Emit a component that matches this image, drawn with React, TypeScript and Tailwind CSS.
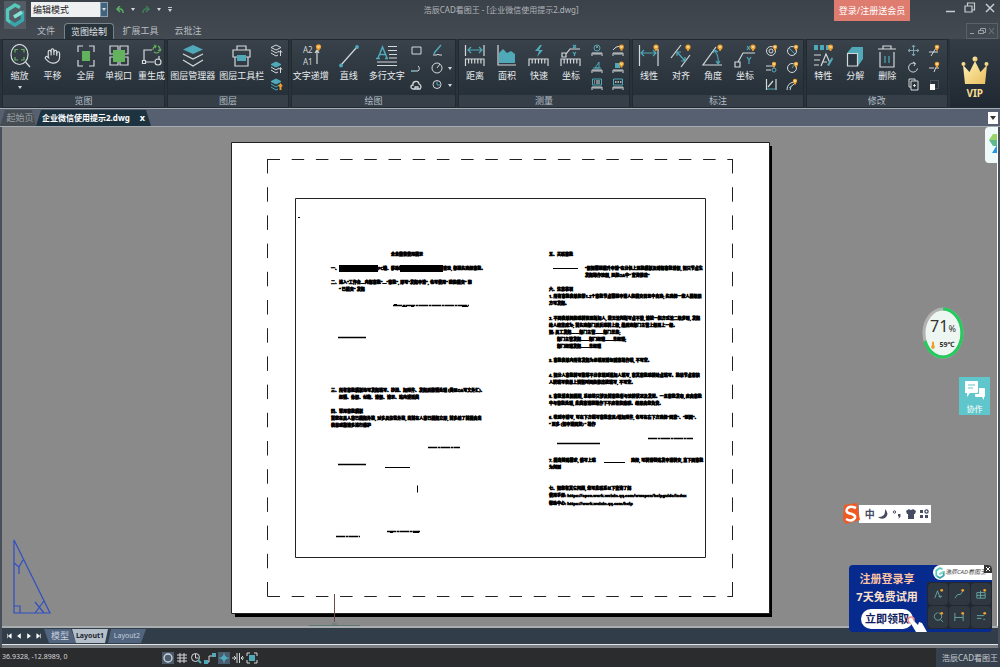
import type { ReactNode } from "react";
import { Hand } from "lucide-react";

const W = "#d3d8db";
const T = "#4fa9b8";
const G = "#62b35c";
const O = "#f0a02c";

/* ---------- icon helpers ---------- */

const Big = ({ children }: { children: ReactNode }) => (
  <svg className="h-6 w-[22px] shrink-0" viewBox="0 0 22 24" fill="none" stroke={W} strokeWidth="1.2">
    {children}
  </svg>
);

const Small = ({ children }: { children: ReactNode }) => (
  <svg className="h-[13px] w-[13px]" viewBox="0 0 13 13" fill="none" stroke={W} strokeWidth="1">
    {children}
  </svg>
);

const Badge = ({ x, y, r = 2.6 }: { x: number; y: number; r?: number }) => (
  <g stroke="none">
    <circle cx={x} cy={y} r={r} fill={O} />
    <rect x={x - 1} y={y + r - 0.6} width="2" height="1.8" fill={O} />
    <path d={`M${x - 1} ${y - 1}L${x} ${y + 1}L${x + 1} ${y - 1}`} stroke="#fff3d0" strokeWidth="0.8" fill="none" />
  </g>
);

const Ruler = ({ x = 1, y = 15, w = 19, h = 7, n = 6 }) => (
  <path
    d={
      `M${x} ${y + h}V${y}H${x + w}V${y + h}` +
      Array.from({ length: n - 1 }, (_, i) => `M${x + ((i + 1) * w) / n} ${y}v${h * 0.65}`).join("")
    }
  />
);

const Caret = () => (
  <svg className="h-[3px] w-1" viewBox="0 0 4 3" fill={W}>
    <path d="M0 0h4L2 3z" />
  </svg>
);

/* ---------- ribbon icons ---------- */

const icons: Record<string, ReactNode> = {
  zoom: (
    <Big>
      <ellipse cx="10.5" cy="10.5" rx="8.5" ry="10" />
      <path d="M16.5 18L21 23" />
      <path d="M6 8.500V5.500h3M12 5.500h3v3M15 13v3h-3M9 16H6v-3" stroke={G} />
    </Big>
  ),
  pan: <Hand className="h-6 w-[17px] shrink-0 text-[#d3d8db]" strokeWidth={1.7} />,
  full: (
    <Big>
      <path d="M3 8V2h5M14 2h5v6M19 16v6h-5M8 22H3v-6" />
      <rect x="7" y="7" width="8" height="10" fill={G} stroke="none" />
    </Big>
  ),
  viewport: (
    <Big>
      <path d="M2 2h8v8H2zM12 2h8v8h-8zM2 13h8v8H2zM12 13h8v8h-8z" />
      <rect x="5" y="6" width="12" height="12" fill={G} stroke="none" />
    </Big>
  ),
  regen: (
    <Big>
      <path d="M11 6H3v12h10M18 12v4" />
      <circle cx="17" cy="18" r="3" />
      <path d="M1.500 16.500h3v3h-3z" fill="#2c363e" />
      <path d="M12 6a4 4 0 0 1 3-4M17 2a4 4 0 0 1 2 4M18 8a4 4 0 0 1-5 0M13 1l2 1-1 2M20 5l-1 2-2-1" stroke={G} />
    </Big>
  ),
  layers: (
    <Big>
      <path d="M11 1l10 4.500-10 4.500L1 5.500z" fill={T} stroke="none" />
      <path d="M1 10l10 5 10-5M1 16l10 6 10-6" />
    </Big>
  ),
  toolbox: (
    <Big>
      <path d="M6 6V2h9v4M2 6h17v7H2zM4 13v9h13v-9" />
      <rect x="6" y="11" width="9" height="6" fill={T} stroke="none" />
    </Big>
  ),
  increment: (
    <Big>
      <g fill={W} stroke="none" fontSize="8" fontFamily="Noto Sans, sans-serif">
        <text x="3" y="9">A2</text>
        <text x="3" y="21">A1</text>
      </g>
      <path d="M17 20V7M15 9l2-3 2 3" />
      <Badge x={18.500} y={2.800} />
    </Big>
  ),
  line: (
    <Big>
      <path d="M3 21L19 3" />
      <circle cx="3" cy="21.500" r="1.900" fill={T} stroke="none" />
      <circle cx="19" cy="3" r="1.900" fill={T} stroke="none" />
    </Big>
  ),
  mtext: (
    <Big>
      <path d="M2 14L6.500 3L11 14M3.500 10.500h6M0 14.500h4M9 14.500h3" stroke={T} strokeWidth="1.500" />
      <path d="M12 2.500h9M12 6.500h9M13 10.500h8M13 14h8M1 18h20M1 21.500h20" />
    </Big>
  ),
  distance: (
    <Big>
      <path d="M1.500 1v11M20 1v11" />
      <path d="M4 6h14M7 3L4 6l3 3M15 3l3 3-3 3" stroke={T} />
      <Ruler x={1.500} w={18.500} />
    </Big>
  ),
  area: (
    <Big>
      <path d="M3 19V9l4-4 4 4 4-2 4 3v9z" fill={T} stroke="none" />
      <path d="M2 1v20h18" />
    </Big>
  ),
  quick: (
    <Big>
      <path d="M12 1L7 7h4l-2 6 6-7h-4l3-5z" fill={T} stroke="none" />
      <Ruler />
    </Big>
  ),
  coord: (
    <Big>
      <path d="M2 9h4v4H2zM6 10l4-5h10" />
      <path d="M13 1l3 3M16 1l-3 3M13 8l1.500 2L16 8M14.500 10v2" stroke={T} />
      <Ruler />
    </Big>
  ),
  linear: (
    <Big>
      <path d="M1.500 1v21M20 5v17" />
      <path d="M3 9h15M6 6L3 9l3 3M15 6l3 3-3 3" stroke={T} />
      <Badge x={18} y={3} />
    </Big>
  ),
  aligned: (
    <Big>
      <path d="M1 14L11 1M11 23l9-12" />
      <path d="M7 8l8 9M7 12V8h4M15 13v4h-4" stroke={T} />
      <Badge x={18} y={3} />
    </Big>
  ),
  angle: (
    <Big>
      <path d="M20 21H1L14 3" />
      <path d="M13 7q4 5 3 12M11 9l2-3 3 2M14 17l2 3 2-3" stroke={T} />
      <Badge x={18} y={3} />
    </Big>
  ),
  ordinate: (
    <Big>
      <path d="M1 18h5v5H1zM4 18l5-9h12" />
      <path d="M13 2l3 4M16 2l-3 4M13 13l2 3 2-3M15 16v4" stroke={T} />
      <Badge x={19} y={3} />
    </Big>
  ),
  props: (
    <Big>
      <path d="M2 1h4v5H2zM8 1h4v5H8zM14 1h3v5h-3z" fill={T} stroke="none" />
      <path d="M2 11h7M2 16h6M2 21h5M9 22l5-12 4 9M10 18h5" />
      <path d="M20 13l-5 8 2 1 4-7z" fill={T} stroke="none" />
      <Badge x={18.500} y={3} />
    </Big>
  ),
  cube: (
    <Big>
      <path d="M3 9L8 3h11v12l-5 7V9z" fill={T} stroke="none" />
      <path d="M3.500 9.500h10V22h-10z" fill="#2c363e" />
    </Big>
  ),
  trash: (
    <Big>
      <path d="M2 5h18M7 5V2h8v3M4 8v15h14V8" />
      <path d="M9 12v7M13 12v7" stroke={T} />
    </Big>
  ),
};

const LayerSmall = ({ top = "none", tail = W }) => (
  <Small>
    <path d="M6 1l5 2.500L6 6 1 3.500z" fill={top} stroke={top === "none" ? W : top} />
    <path d="M1 6l5 3 3-2M1 9l5 3 2-1" stroke={tail === O ? T : W} />
    <path d="M10.500 12V7M9 8.500l1.500-2 1.500 2" stroke={tail} strokeWidth={tail === O ? 1.8 : 1} />
  </Small>
);

const layerTools = [
  <LayerSmall />,
  <LayerSmall top={T} />,
  <LayerSmall top={T} tail={O} />,
];

const drawTools = [
  <Small><path d="M2 3h9v7H2z" /></Small>,
  <Small><path d="M1 10h7a3 3 0 0 0 0-5" /><path d="M1 10h4" stroke={T} /></Small>,
  <Small><path d="M3 11a2 2 0 0 1 0-4 3 3 0 0 1 6-1 3 3 0 0 1 1 5zM5 11V9h3v2" strokeWidth="1.300" /></Small>,
];

const drawTools2 = [
  <Small><path d="M10 1L4 8l-1 2" stroke={T} strokeWidth="1.500" /><path d="M2 11h4q1-2 2 0h3" /></Small>,
  <Small><circle cx="6" cy="7" r="5" /><path d="M6 7l3-4" /></Small>,
  <Small><circle cx="6" cy="6.500" r="4" /><path d="M6 3.500V7h3" stroke={T} /></Small>,
];

const measureTools = [
  <Small><circle cx="6" cy="4" r="3" stroke={T} /><path d="M6 2v2" /><Ruler x={1} y={9} w={10} h={3} n={5} /></Small>,
  <Small><path d="M4 7l4-6v6zM2 7h8" stroke={T} /><Ruler x={1} y={9} w={10} h={3} n={5} /></Small>,
  <Small><path d="M1.500 1h9v6h-9z" stroke={T} /><path d="M3 3h1M5 3h4M3 5h1M5 5h4" /><Ruler x={1} y={9} w={10} h={3} n={5} /></Small>,
];

const measureTools2 = [
  <Small><path d="M1 6q4-5 8-3" /><Ruler x={1} y={9} w={10} h={3} n={5} /><Badge x={9.500} y={3} r={2.400} /></Small>,
  <Small><path d="M3 2h5v5H3z" fill={T} stroke="none" /><Ruler x={1} y={9} w={10} h={3} n={5} /><Badge x={9.500} y={3} r={2.400} /></Small>,
  <Small><path d="M1.500 1h9v6h-9z" stroke={T} /><path d="M3 4h1.500M5.500 4H7M8 4h1.500" strokeWidth="1.500" /><Ruler x={1} y={9} w={10} h={3} n={5} /></Small>,
];

const dimTools = [
  <Small><circle cx="6" cy="7" r="4.500" /><circle cx="6" cy="7" r="2" /><Badge x={10} y={3} r={2.200} /></Small>,
  <Small><path d="M1 5h7M1 9h5" /><circle cx="9" cy="9" r="2" stroke={T} /><Badge x={9} y={3} r={2.200} /></Small>,
  <Small><path d="M1.500 1v11M11 1v11M3 9l5-6" strokeWidth="1.200" /><path d="M2 11h8" stroke={T} /></Small>,
];

const dimTools2 = [
  <Small><circle cx="6" cy="7" r="4.500" /><path d="M3 4l6 6" stroke={T} /><Badge x={10} y={3} r={2.200} /></Small>,
  <Small><circle cx="6" cy="7" r="4.500" /><path d="M6 7l3-4" stroke={T} /><Badge x={10} y={3} r={2.200} /></Small>,
  <Small><path d="M1 12q0-7 7-8M4 12q0-4 4-6" /><path d="M3 10l2-2" stroke={T} /><Badge x={9} y={3} r={2.200} /></Small>,
];

const modTools = [
  <Small><path d="M6.500 1v11M1 6.500h11M5 3l1.500-2L8 3M5 10l1.500 2L8 10M3 5L1 6.500 3 8M10 5l2 1.500L10 8" stroke="#7fa3b0" /></Small>,
  <Small><path d="M8 2.500a4.500 4.500 0 1 0 2.500 5M6 1l2.500 1.500L7 5" /></Small>,
  <Small><path d="M2 1h6v2M2 1v8h2M4 3h7v9H4zM6 7.500h3M7.500 6v3" /></Small>,
];

const modTools2 = [
  <Small><path d="M1 8h9M3 12l5-8" /><Badge x={9} y={3} r={2.300} /></Small>,
  <Small><path d="M1 7h5M8 7h3M6 11l2-5" /><Badge x={9} y={3} r={2.300} /></Small>,
  <Small><path d="M2.500 2.500h8v8h-8z" stroke="#64717a" strokeDasharray="1 1" /><path d="M2 6h5v6H2z" fill="#fff" stroke="none" /></Small>,
];

/* ---------- ribbon ---------- */

type Tool = { icon: string; label: string; menu?: boolean };

type GroupProps = {
  title: string;
  tools: Tool[];
  className: string;
  toolClass?: string;
  columns?: ReactNode[][];
  carets?: boolean;
};

const RibbonGroup = ({ title, tools, className, toolClass = "w-8", columns = [], carets }: GroupProps) => (
  <section aria-label={title} className={`flex min-w-0 flex-col border border-[#222a31] bg-linear-to-b from-[#39424a] to-[#222c34] ${className}`}>
    <div className="flex flex-1">
      {tools.map((t) => (
        <button key={t.label} className={`flex shrink-0 flex-col items-center pt-1 ${toolClass}`}>
          {icons[t.icon]}
          <span className="mt-0.5 text-[9px] leading-3 whitespace-nowrap text-[#e8ecee]">{t.label}</span>
          {t.menu && <span className="mt-1"><Caret /></span>}
        </button>
      ))}
      {columns.map((col, i) => (
        <div key={i} className="flex w-[21px] shrink-0 flex-col items-center pt-0.5">
          {col.map((icon, j) => (
            <button key={j} aria-label={`${title} ${i * 3 + j + 1}`} className="flex h-[17px] items-center">
              {icon}
            </button>
          ))}
        </div>
      ))}
      {carets && (
        <div className="flex flex-col justify-end gap-3.5 pb-2">
          <Caret />
          <Caret />
        </div>
      )}
    </div>
    <h2 className="h-3 bg-[#363f47] text-center text-[9px] leading-3 text-[#b3bec8]">{title}</h2>
  </section>
);

const Ribbon = () => (
  <div className="flex h-[69px] gap-0.5 bg-[#2a323a] pl-0.5">
    <RibbonGroup
      title="览图"
      className="flex-[163]"
      toolClass="w-[33px]"
      tools={[
        { icon: "zoom", label: "缩放", menu: true },
        { icon: "pan", label: "平移" },
        { icon: "full", label: "全屏" },
        { icon: "viewport", label: "单视口" },
        { icon: "regen", label: "重生成" },
      ]}
    />
    <RibbonGroup
      title="图层"
      className="flex-[121]"
      toolClass="w-[49px]"
      tools={[
        { icon: "layers", label: "图层管理器" },
        { icon: "toolbox", label: "图层工具栏" },
      ]}
      columns={[layerTools]}
    />
    <RibbonGroup
      title="绘图"
      className="flex-[165]"
      toolClass="w-[38px]"
      tools={[
        { icon: "increment", label: "文字递增" },
        { icon: "line", label: "直线" },
        { icon: "mtext", label: "多行文字" },
      ]}
      columns={[drawTools, drawTools2]}
      carets
    />
    <RibbonGroup
      title="测量"
      className="flex-[172]"
      tools={[
        { icon: "distance", label: "距离" },
        { icon: "area", label: "面积" },
        { icon: "quick", label: "快速" },
        { icon: "coord", label: "坐标" },
      ]}
      columns={[measureTools, measureTools2]}
    />
    <RibbonGroup
      title="标注"
      className="flex-[172]"
      tools={[
        { icon: "linear", label: "线性" },
        { icon: "aligned", label: "对齐" },
        { icon: "angle", label: "角度" },
        { icon: "ordinate", label: "坐标" },
      ]}
      columns={[dimTools, dimTools2]}
    />
    <RibbonGroup
      title="修改"
      className="flex-[141]"
      tools={[
        { icon: "props", label: "特性" },
        { icon: "cube", label: "分解" },
        { icon: "trash", label: "删除" },
      ]}
      columns={[modTools, modTools2]}
    />
    <button className="flex flex-[51] flex-col items-center bg-linear-to-b from-[#343d45] to-[#202931] pt-4">
      <svg className="h-[30px] w-7" viewBox="0 0 28 30">
        <defs>
          <linearGradient id="gold" x1="0" y1="0" x2="1" y2="1">
            <stop offset="0" stopColor="#fff3b8" />
            <stop offset="1" stopColor="#e9bd5b" />
          </linearGradient>
        </defs>
        <g fill="url(#gold)">
          <path d="M2 10l6.500 7L14 6l5.500 11L26 10l-2 19H4z" />
          <circle cx="2.500" cy="9" r="2" />
          <circle cx="14" cy="4" r="2.500" />
          <circle cx="25.500" cy="9" r="2" />
        </g>
      </svg>
      <span className="text-[10px] leading-4 font-bold text-[#f6dc92]">VIP</span>
    </button>
  </div>
);

/* ---------- title bar and menu ---------- */

const Logo = ({ className }: { className: string }) => (
  <svg className={className} viewBox="0 0 20 24" fill="none" strokeWidth="3.400">
    <path d="M15 4.500L10 2 2.500 7v10l4 3" stroke="#56c9bd" />
    <path d="M5 19l5 3 7.500-5v-7L9 14" stroke="#37a6ad" />
    <path d="M9 14l8-5" stroke="#8be0d0" />
  </svg>
);

const TitleBar = () => (
  <header className="flex h-[39px] bg-linear-to-b from-[#3c4249] to-[#434a51]">
    <div className="mt-px ml-1 flex h-7 w-[22px] items-center justify-center bg-[#535c65]">
      <Logo className="h-6 w-5" />
    </div>
    <div className="min-w-0 flex-1">
      <div className="flex h-[22px]">
        <div className="flex flex-[398] items-start gap-2 pt-0.5 pl-[5px]">
          <div className="relative flex h-[15px] w-[77px]">
            <select aria-label="工作模式" className="w-full appearance-none bg-[#eef0f1] px-0.5 text-[9px] leading-[15px] text-[#1c1c1c]">
              <option>编辑模式</option>
            </select>
            <span className="pointer-events-none absolute top-0 right-0 flex h-full w-2 items-center justify-center border border-[#8ba0b0] bg-[#41637c]">
              <Caret />
            </span>
          </div>
          <div className="flex h-[15px] items-center gap-[7px]">
            <button aria-label="撤销">
              <svg className="h-2 w-2" viewBox="0 0 8 8" fill="none" stroke="#59b061" strokeWidth="1.500"><path d="M4 0L1 3l3 3M1 3h3q3 0 3 4" /></svg>
            </button>
            <Caret />
            <button aria-label="重做">
              <svg className="h-2 w-2" viewBox="0 0 8 8" fill="none" stroke="#3f7d58" strokeWidth="1.500"><path d="M4 0l3 3-3 3M7 3H4Q1 3 1 7" /></svg>
            </button>
            <Caret />
            <span className="border-t border-[#c0c6ca] pt-px"><Caret /></span>
          </div>
        </div>
        <h1 className="pt-1 text-center text-[8px] leading-3 whitespace-nowrap text-[#b0b5ba]">浩辰CAD看图王 - [企业微信使用提示2.dwg]</h1>
        <div className="flex flex-[427] items-start justify-end">
          <button className="h-[21px] w-[76px] bg-[#de7c70] text-[9px] text-white">登录/注册送会员</button>
          <div className="ml-[34px] flex items-center gap-2 pt-0.5 pr-1 text-[#c9cdd0]">
            <button aria-label="最小化"><svg className="h-3 w-3" viewBox="0 0 12 12" stroke="currentColor" strokeWidth="1.500"><path d="M2 9.500h9" /></svg></button>
            <button aria-label="还原"><svg className="h-3 w-3" viewBox="0 0 12 12" fill="none" stroke="currentColor" strokeWidth="1.200"><path d="M3.500 3.500V1h7v7H8M1 4h7v6H1z" /></svg></button>
            <button aria-label="关闭"><svg className="h-3 w-3" viewBox="0 0 12 12" stroke="currentColor" strokeWidth="1.500"><path d="M2 2l8 8M10 2l-8 8" /></svg></button>
          </div>
        </div>
      </div>
      <div className="flex h-[17px] items-end justify-between text-[9px] leading-3 text-[#b9bfc4]">
        <nav className="flex items-end pl-0.5">
          <button className="w-9 pb-0.5">文件</button>
          <button className="h-4 w-[50px] rounded-t-sm border border-b-0 border-[#77838b] bg-[#27323a] text-[#e4e8ea]">览图绘制</button>
          <button className="w-[53px] pb-0.5">扩展工具</button>
          <button className="w-[42px] pb-0.5">云批注</button>
        </nav>
        <div className="mr-0.5 flex h-4 w-8 items-center justify-around border border-[#59626a]">
          <button aria-label="最小化图纸"><svg className="h-2 w-2" viewBox="0 0 8 8" stroke="#9aa1a6"><path d="M2 6.500h4" /></svg></button>
          <button aria-label="还原图纸"><svg className="h-2 w-2" viewBox="0 0 8 8" fill="none" stroke="#9aa1a6"><path d="M2.500 3V1.500h5v4H6M.5 3.500h5v3h-5z" /></svg></button>
          <button aria-label="关闭图纸"><svg className="h-2 w-2" viewBox="0 0 8 8" stroke="#747b81"><path d="M1 1l5 6M6 1L1 7" /></svg></button>
        </div>
      </div>
    </div>
  </header>
);

const DocTabs = () => (
  <nav className="flex h-[19px] items-end justify-between border-y border-[#a6adb2] bg-[#566070] pt-px">
    <div className="flex h-full items-end text-[9px] leading-4">
      <button className="h-full w-9 bg-[#454c52] pl-1 text-[#9aa2a9] [clip-path:polygon(5px_0,32px_0,36px_100%,0_100%)]">起始页</button>
      <div className="flex h-full items-center bg-[#1e3340] pr-1.5 pl-1.5 font-bold text-white [clip-path:polygon(5px_0,calc(100%-5px)_0,100%_100%,0_100%)]">
        <a href="#sheet" className="text-[8px]">企业微信使用提示2.dwg</a>
        <button aria-label="关闭标签" className="pl-2.5">x</button>
      </div>
    </div>
    <button aria-label="标签列表" className="mr-0.5 mb-0.5 flex h-3 w-2.5 items-center justify-center bg-white">
      <svg className="h-1 w-1.5" viewBox="0 0 6 4"><path d="M0 0h6L3 4z" fill="#333" /></svg>
    </button>
  </nav>
);

/* ---------- drawing sheet ---------- */

const notes: [number, number, string][] = [
  [391, 256, "企业微信使用提示"],
  [331, 270, "一、"],
  [378, 270, "PC端、移动端"],
  [443, 270, "登录, 都要先选择审批。"],
  [331, 284, "二、进入“工作台—内部审批”—“审批”, 即可“发起申请”, 也可使用“ 我的提交” 和"],
  [339, 291, "“ 已提交” 发起"],
  [331, 392, "三、所有审批模板均可发起填写、抄送、加附件、发起后撤销处理 (类似OA可文外汇)、"],
  [339, 399, "报销、休假、付款、请假、请示、站内讲话类"],
  [331, 413, "四、常用审批模板"],
  [331, 420, "首家在员人审已提起外签, 对多具体性外签, 当前在人审已提起立即, 前多结了前提由当"],
  [331, 427, "表单或指请多进行维护"],
  [549, 256, "五、关联审批"],
  [585, 270, "“假如需要提升申请”在分机上更换模板及跨部审批请假, 如只节点生"],
  [585, 277, "发起操作流程, 民航OA中“ 查询修改”"],
  [549, 291, "六、注意事项"],
  [549, 298, "1. 所有审批表单的第1-2个审批节点需要申请人的提交目录中自选; 先选择一些人层级限"],
  [549, 305, "方可发起。"],
  [549, 320, "2. 不同表单间的跳转和更新加人, 若无法判断写点不清, 请按一般方式法二级步骤, 发起"],
  [549, 327, "给人结束成为; 首先选部门后反跳转上级, 最后选部门主管上级再上一级。"],
  [549, 334, "如: 员工发起——部门主管——部门总监;"],
  [557, 341, "部门主管发起——部门经理——总经理;"],
  [557, 348, "部门经理发起——总经理"],
  [549, 362, "3. 审批表单内所有发起为必填项请勿随意操作填, 不可空。"],
  [549, 377, "4. 如分人审批转写数等不分享填到追加人填写, 审其审批跳转给点填写。接单节点审核"],
  [549, 384, "人转填写表单上调整时间的修改按填写, 不可空。"],
  [549, 398, "5. 审批消息如提醒, 系统将只涉及前审批者与流转状况及发送。一旦审批发布, 应由审批"],
  [549, 405, "中与审批处理, 此类审请按操作下不应有的隐瞒。结果由您负责。"],
  [549, 419, "6. 收到申请写, 可在下方继写审批意见/增加附件, 也可在右下方选择“同意”、“驳回”、"],
  [549, 426, "“ 更多 (如申请回复) ” 操作"],
  [549, 462, "7. 提出特殊需求, 催写上班"],
  [631, 462, "选择, 可转请特殊发申请转交, 直下回审批"],
  [549, 469, "为判别"],
  [549, 490, "七、如您有其它问题, 您可此联系以下查询了解"],
  [549, 497, "使用手册: https://open.work.weixin.qq.com/wwopen/helpguide/index"],
  [549, 505, "帮助中心: https://work.weixin.qq.com/help"],
];

const Sheet = () => (
  <svg id="sheet" className="h-[484px] w-[542px] shrink-0" viewBox="231 142 542 484">
    <path d="M235 146h537v471H235z" fill="#000" />
    <path d="M231.500 142.500h538v471h-538z" fill="#fff" stroke="#222" />
    <g fill="none" stroke="#222">
      <path d="M267.500 159.500H733M267.500 596.500H733" strokeDasharray="12.500 11.700" />
      <path d="M267.500 596.500V159M732.500 596.500V159" strokeDasharray="14.500 13.700" />
      <path d="M295.500 198.500H705.500V557.500H295.500z" />
    </g>
    <path d="M339 265h39v7h-39zM400 265h43v7h-43z" />
    <g fontSize="4" fontWeight="700" stroke="#000" strokeWidth="0.600" fontFamily="Noto Sans, Noto Sans CJK SC, sans-serif">
      {notes.map(([x, y, text]) => (
        <text key={y * 1000 + x} x={x} y={y}>{text}</text>
      ))}
    </g>
    <g stroke="#000" fill="none">
      <path d="M338 337.500h28M338 464.500h28" strokeWidth="1.400" />
      <path d="M393 305.500h76M428 447.500h32M387 531.500h33M336 536.500h24M648 438.500h45" strokeWidth="1.600" strokeDasharray="9 0.600 3 0.400" />
      <path d="M394 304.500h3M402 306.500h5M411 306.500h3M462 306.500h6M390 532.500h3M413 532.500h6" />
      <path d="M385 467.500h25M553 268.500h25M604 462.500h21M298 217.500h2" />
      <path d="M557 443.500h43" strokeWidth="1.400" />
      <path d="M417.500 485.500v7" />
    </g>
    <path d="M334.500 594v28" stroke="#6b4a4a" />
    <path d="M309 625.500h51M332 624h5" stroke="#5f7773" />
  </svg>
);

const UcsIcon = () => (
  <svg className="absolute bottom-2.5 left-2.5 h-[78px] w-10" viewBox="0 0 40 78" fill="none" stroke="#2f4fc4" strokeWidth="1.200">
    <path d="M2 2v73h36zM2 68h6v7M2 25l5 4 4-7M7 29v7M23 64l9 11M32 63l-9 12" />
  </svg>
);

/* ---------- floating widgets ---------- */

const LoadBall = () => (
  <div className="absolute top-[180px] right-[33px] flex h-[52px] w-[42px] items-center justify-center">
    <svg className="absolute inset-0 h-full w-full" viewBox="0 0 42 52" fill="none">
      <ellipse cx="21" cy="26" rx="19" ry="24" fill="#edf6f0" stroke="#b2b2b2" strokeWidth="3" />
      <path d="M21 2a19 24 0 1 1-18 32" stroke="#22cc5c" strokeWidth="3" />
    </svg>
    <div className="relative text-center text-[#333]">
      <p className="text-base leading-4">71<span className="text-[9px]">%</span></p>
      <p className="mt-1 flex items-center justify-center gap-1 text-[7px] leading-2 font-bold">
        <svg className="h-2 w-1" viewBox="0 0 4 8"><path d="M1 1q1-1 2 0v3q2 3-1 4-3-1-1-4z" fill="#f19a2a" /></svg>
        59℃
      </p>
    </div>
  </div>
);

const Collaborate = () => (
  <button className="absolute top-[250px] right-[7px] flex h-[38px] w-[31px] flex-col items-center bg-[#5fc6cb] pt-1 text-[8px] leading-3 text-white">
    <svg className="h-5 w-5" viewBox="0 0 20 20" fill="#fff">
      <path d="M1 0h11q1 0 1 1v10q0 1-1 1H5l-3 4v-4H0V1q0-1 1-1z" />
      <path d="M14 7h5q1 0 1 1v7q0 1-1 1v3l-2-3h-6q-1 0-1-1v-2h4z" />
      <path d="M3 4h7M3 7h5" stroke="#5fc6cb" strokeWidth="1.200" />
    </svg>
    <span className="mt-0.5">协作</span>
  </button>
);

const ImeBar = () => (
  <div className="absolute top-[378px] right-[66px] flex h-[18px] w-[72px] items-center justify-around bg-white text-[#454b60]">
    <svg className="absolute -top-0.5 -left-[17px] h-[21px] w-[18px]" viewBox="0 0 18 21">
      <path d="M2 2l13-2 3 17-14 4-3-4z" fill="#ee5a24" />
      <path d="M14 5Q7 2 5 6t5 5q5 2 2 5t-8 0" fill="none" stroke="#fff" strokeWidth="2.500" />
    </svg>
    <span className="pl-1 text-[10px] leading-4 font-bold">中</span>
    <svg className="h-2.5 w-2.5" viewBox="0 0 10 10" fill="currentColor"><path d="M7 0q5 5 0 9-4 2-7-1 8 0 7-8z" /></svg>
    <svg className="h-2.5 w-2.5" viewBox="0 0 10 10" fill="currentColor"><circle cx="2.500" cy="3" r="1.200" fill="none" stroke="currentColor" /><path d="M6 5h2.500v2.500L6.500 10 7 7.500H6z" /></svg>
    <svg className="h-2.5 w-2.5" viewBox="0 0 10 10" fill="currentColor"><path d="M3 0q2 2 4 0l3 2-1 3H8v5H2V5H1L0 2z" /></svg>
    <svg className="h-2.5 w-2.5" viewBox="0 0 10 10" fill="currentColor"><path d="M1 1h3v3H1zM1 6h3v3H1zM6 6h3v3H6z" /><circle cx="7.500" cy="2.500" r="1.600" fill="none" stroke="currentColor" strokeWidth="1.300" /></svg>
  </div>
);

const adIcons = [
  "M3 11L6 3l3 8M7 9h4",
  "M2 11l3-4h3l3-4",
  "M2 5h9v6H2zM2 8h9M6 3v8",
  "M6 2a4 4 0 1 0 1 0M9 9l3 3",
  "M2 2v9M11 3v8M2 7h9",
  "M2 5h8M2 8h5M9 9h2",
];

const Promo = () => (
  <aside className="absolute right-1.5 bottom-4 flex h-[67px] w-[143px] overflow-hidden rounded-sm bg-[#062a8e]">
    <div className="flex w-[76px] shrink-0 flex-col items-center pt-1.5 font-bold">
      <p className="text-[11px] leading-4 text-[#ffc4a3]">注册登录享</p>
      <p className="text-[11px] leading-5 whitespace-nowrap text-[#ffe0c8]">7天免费试用</p>
      <button className="mt-0.5 h-5 w-[52px] rounded-full bg-white text-[11px] leading-4 text-[#101d60]">立即领取</button>
    </div>
    <svg className="absolute top-[51px] left-[58px] h-4 w-5" viewBox="0 0 20 16">
      <circle cx="4" cy="4" r="3" fill="none" stroke="#f08d8d" strokeWidth="1.500" />
      <path d="M3 4q2-2 4 1l4 4 1-3 3 1 5 9H9L3 6z" fill="#fff" />
    </svg>
    <div className="min-w-0 flex-1 pl-0.5">
      <div className="ml-1.5 flex h-[15px] items-center rounded-l-full bg-white pl-0.5 text-[6px] whitespace-nowrap text-[#444] italic">
        <Logo className="h-3 w-2.5 shrink-0" />
        浩辰CAD看图王
      </div>
      <div className="mt-0.5 grid h-[47px] grid-cols-3 gap-px bg-[#222830] p-px">
        {adIcons.map((d) => (
          <span key={d} className="flex items-center justify-center rounded-sm bg-[#2f3740]">
            <svg className="h-3 w-3" viewBox="0 0 13 13" fill="none" stroke="#69a9a7">
              <path d={d} />
              <circle cx="10.500" cy="2.500" r="1.500" fill={O} stroke="none" />
            </svg>
          </span>
        ))}
      </div>
    </div>
    <button aria-label="关闭广告" className="absolute top-0 right-0 h-2 w-2 bg-[#333]">
      <svg viewBox="0 0 8 8" stroke="#fff"><path d="M2 2l4 4M6 2L2 6" /></svg>
    </button>
  </aside>
);

/* ---------- bottom bars ---------- */

const LayoutTabs = () => (
  <nav className="flex h-[18px] items-center border-t-2 border-[#a9adb0] bg-[#323d4a] pl-0.5 text-[8px] leading-3">
    {["M2 1v6M7 1L3 4l4 3z", "M6 1L2 4l4 3z", "M2 1l4 3-4 3z", "M1 1l4 3-4 3zM6 1v6"].map((d, i) => (
      <button key={d} aria-label={["首个", "上一个", "下一个", "末个"][i]} className="flex w-2.5 justify-center">
        <svg className="h-1.5 w-1.5" viewBox="0 0 8 8" fill="#fff" stroke="#fff" strokeWidth="0.800"><path d={d} /></svg>
      </button>
    ))}
    <button className="h-3.5 w-8 bg-[#52657f] text-[9px] text-[#c5d0dc] [clip-path:polygon(0_0,27px_0,100%_100%,5px_100%)]">模型</button>
    <button className="-ml-1 h-3.5 w-9 bg-[#b4bfca] text-[7px] font-bold text-[#1c2430] [clip-path:polygon(0_0,100%_0,33px_100%,4px_100%)]">Layout1</button>
    <button className="h-3.5 w-[38px] bg-[#52657f] text-[7px] text-[#c5d0dc] [clip-path:polygon(3px_0,100%_0,33px_100%,0_100%)]">Layout2</button>
  </nav>
);

const statusIcons: ReactNode[] = [
  <circle cx="6" cy="6" r="4" strokeWidth="1.300" />,
  <path d="M4 1v10M8 1v10M1 3h10M1 6h10M1 9h10" />,
  <><circle cx="5.500" cy="5.500" r="4" /><path d="M5.500 2v4h3" /><path d="M8 8l3 3" stroke={T} strokeWidth="2" /></>,
  <><path d="M2 10h3V4h5" /><path d="M0 8h4v4H0zM8 1h4v4H8z" fill={T} stroke="none" /></>,
  <path d="M6 1v10M1 6h10M6 3l3 3-3 3-3-3z" stroke={T} fill={T} />,
  <path d="M5 1v10M7.500 1v10M0 6h3M9 6h3M2 4l2 2-2 2M11 4L9 6l2 2" />,
  <><path d="M1 4V1h3M8 1h3v3M11 8v3H8M4 11H1V8" /><path d="M3 3h6v6H3z" fill={T} stroke="none" /></>,
];

const StatusBar = () => (
  <footer className="flex h-[19px] items-center bg-[#2b2c2e] text-[7px] text-[#d8dadb]">
    <p className="w-[162px] pl-0.5">36.9328, -12.8989, 0</p>
    {statusIcons.map((icon, i) => (
      <button
        key={i}
        aria-label={["捕捉", "栅格", "极轴", "正交", "对象捕捉", "线宽", "全屏显示"][i]}
        className={i === 0 || i === 4 ? "mr-0.5 bg-[#4a5c6d]" : "mr-0.5"}
      >
        <svg className="h-3 w-3" viewBox="0 0 12 12" fill="none" stroke={W}>{icon}</svg>
      </button>
    ))}
    <p className="ml-auto flex h-full items-center bg-[#37414d] pr-0.5 pl-1.5 text-[8px] text-[#c5cbd0]">浩辰CAD看图王</p>
  </footer>
);

export default function App() {
  return (
    <div className="flex min-h-screen flex-col bg-[#2a323a] font-['Noto_Sans','Noto_Sans_CJK_SC',sans-serif]">
      <TitleBar />
      <Ribbon />
      <DocTabs />
      <main className="relative flex flex-1 flex-col border-x-2 border-[#47505a] bg-[#8a8a8a]">
        <div className="relative flex flex-1 justify-center overflow-hidden border-r border-white pt-[15px] pl-1">
          <Sheet />
          <UcsIcon />
          <LoadBall />
          <Collaborate />
          <ImeBar />
          <button aria-label="助手" className="absolute top-0 right-0 h-9 w-3 rounded-l-sm bg-[#eef9fa]">
            <svg className="h-full w-full" viewBox="0 0 12 36">
              <path d="M4 13l4-6h4v7z" fill="#9ad36c" />
              <path d="M4 13h8v6H8z" fill="#5fb98f" />
              <path d="M12 18l-5 8h5z" fill="#2497e0" />
            </svg>
          </button>
        </div>
        <LayoutTabs />
        <Promo />
        <div className="h-1 border-t border-[#e2e4e6] bg-[#7b8085]" />
      </main>
      <StatusBar />
    </div>
  );
}
